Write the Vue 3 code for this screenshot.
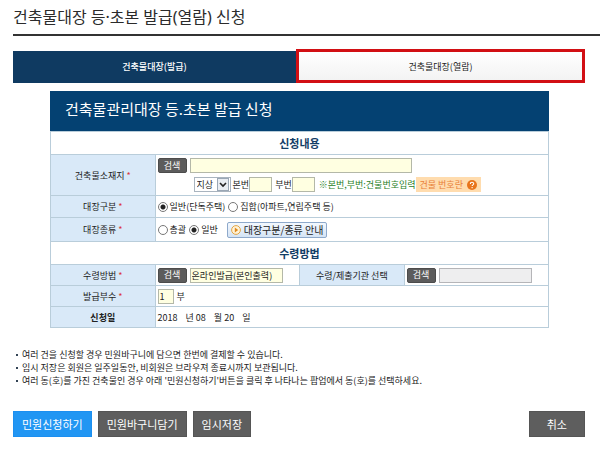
<script setup>
import { ref } from 'vue'

const address = ref('')
const ground = ref('지상')
const mainNo = ref('')
const subNo = ref('')
const ledger = ref('general')
const kind = ref('general')
const method = ref('온라인발급(본인출력)')
const agency = ref('')
const copies = ref('1')

const notes = [
  '여러 건을 신청할 경우 민원바구니에 담으면 한번에 결제할 수 있습니다.',
  '임시 저장은 회원은 일주일동안, 비회원은 브라우져 종료시까지 보관됩니다.',
  "여러 동(호)를 가진 건축물인 경우 아래 '민원신청하기'버튼을 클릭 후 나타나는 팝업에서 동(호)를 선택하세요.",
]
</script>

<template>
  <main class="page">
    <h1>건축물대장 등·초본 발급(열람) 신청</h1>

    <nav class="tabs">
      <a href="#issue" class="tab tab-active">건축물대장(발급)</a>
      <a href="#view" class="tab tab-marked">건축물대장(열람)</a>
    </nav>

    <form class="form" @submit.prevent>
      <h2>건축물관리대장 등.초본 발급 신청</h2>
      <table>
        <colgroup>
          <col class="c-label" /><col class="c-value" /><col class="c-label" /><col />
        </colgroup>
        <tbody>
          <tr class="section"><th colspan="4">신청내용</th></tr>
          <tr class="row-address">
            <th scope="row"><label for="address">건축물소재지 <i>*</i></label></th>
            <td colspan="3">
              <div class="line">
                <button type="button" class="search">검색</button>
                <input id="address" v-model="address" type="text" class="field wide" />
              </div>
              <div class="line sub">
                <span class="select">
                  <select v-model="ground" aria-label="지상"><option>지상</option></select>
                  <svg viewBox="0 0 12 13" aria-hidden="true">
                    <rect x="0.5" y="0.5" width="11" height="12" fill="#e9edf2" stroke="#9aa7b5" />
                    <path d="M3 5l3 3 3-3" fill="none" stroke="#222" stroke-width="1.6" />
                  </svg>
                </span>
                <label for="main-no">본번</label>
                <input id="main-no" v-model="mainNo" type="text" class="field number" />
                <label for="sub-no" class="second">부번</label>
                <input id="sub-no" v-model="subNo" type="text" class="field number" />
                <span class="hint">※본번,부번:건물번호입력</span>
                <a href="#number" class="tag">건물 번호란
                  <svg viewBox="0 0 10 10" aria-hidden="true">
                    <circle cx="5" cy="5" r="5" fill="#e8751c" />
                    <path d="M3.3 4c0-2.2 3.4-2.2 3.4-.2 0 1.1-1.6 1.1-1.6 2.3M5.1 7.1v1.1" fill="none" stroke="#fff" stroke-width="1.1" />
                  </svg>
                </a>
              </div>
            </td>
          </tr>
          <tr class="row-ledger">
            <th scope="row">대장구분 <i>*</i></th>
            <td colspan="3">
              <div class="line">
                <label class="radio"><input v-model="ledger" type="radio" name="ledger" value="general" />일반(단독주택)</label>
                <label class="radio"><input v-model="ledger" type="radio" name="ledger" value="group" />집합(아파트,연립주택 등)</label>
              </div>
            </td>
          </tr>
          <tr class="row-kind">
            <th scope="row">대장종류 <i>*</i></th>
            <td colspan="3">
              <div class="line">
                <label class="radio"><input v-model="kind" type="radio" name="kind" value="all" />총괄</label>
                <label class="radio"><input v-model="kind" type="radio" name="kind" value="general" />일반</label>
                <button type="button" class="guide">
                  <svg viewBox="0 0 10 10" aria-hidden="true">
                    <circle cx="5" cy="5" r="4.4" fill="#fff3d8" stroke="#e3a545" />
                    <path d="M3.8 2.4L7.2 5 3.8 7.6z" fill="#e08a1c" />
                  </svg>
                  대장구분/종류 안내
                </button>
              </div>
            </td>
          </tr>
          <tr class="section"><th colspan="4">수령방법</th></tr>
          <tr class="row-plain">
            <th scope="row"><label for="method">수령방법 <i>*</i></label></th>
            <td>
              <div class="line">
                <button type="button" class="search">검색</button>
                <input id="method" v-model="method" type="text" class="field medium" />
              </div>
            </td>
            <th scope="row"><label for="agency">수령/제출기관 선택</label></th>
            <td>
              <div class="line">
                <button type="button" class="search">검색</button>
                <input id="agency" v-model="agency" type="text" class="field medium muted" readonly />
              </div>
            </td>
          </tr>
          <tr class="row-plain">
            <th scope="row"><label for="copies">발급부수 <i>*</i></label></th>
            <td colspan="3">
              <div class="line">
                <input id="copies" v-model="copies" type="text" class="field tiny" />
                <span>부</span>
              </div>
            </td>
          </tr>
          <tr class="row-plain">
            <th scope="row" class="strong">신청일</th>
            <td colspan="3">
              <div class="date">
                <span>2018</span><span>년 08</span><span>월 20</span><span>일</span>
              </div>
            </td>
          </tr>
        </tbody>
      </table>
    </form>

    <ul class="notes">
      <li v-for="note in notes" :key="note">{{ note }}</li>
    </ul>

    <div class="actions">
      <button type="button" class="primary">민원신청하기</button>
      <button type="button">민원바구니담기</button>
      <button type="button">임시저장</button>
      <button type="button" class="cancel">취소</button>
    </div>
  </main>
</template>

<style>
body {
  background: #fff;
}
</style>

<style scoped>
.page,
.page * {
  box-sizing: border-box;
}
.page {
  padding-left: 13px;
  font-family: "Noto Sans CJK KR", sans-serif;
  font-size: 9px;
  line-height: 13px;
  color: #222;
}
button,
input,
select {
  font: inherit;
  color: inherit;
  margin: 0;
}
button {
  cursor: pointer;
  white-space: nowrap;
}
h1 {
  margin: 0;
  height: 36px;
  padding-top: 5px;
  border-bottom: 2px solid #333;
  color: #2b2b2b;
  font-family: "Noto Sans", "Noto Sans CJK KR", sans-serif;
  font-size: 16px;
  line-height: 24px;
  font-weight: 400;
}
.tabs {
  display: flex;
  margin: 13px 15px 0 0;
  align-items: flex-end;
}
.tab {
  flex: 1;
  height: 32px;
  line-height: 32px;
  text-align: center;
  text-decoration: none;
  color: #222;
}
.tab-active {
  background: #0f3a61;
  color: #fff;
  font-weight: 500;
}
.tab-marked {
  height: 34px;
  border: 3px solid #d20f14;
  background: linear-gradient(#fff, #f3f3f3);
  line-height: 30px;
}
.form {
  margin: 8px 51px 0 37px;
}
h2 {
  margin: 0;
  height: 40px;
  padding-left: 15px;
  background: #044172;
  color: #fff;
  font-size: 15px;
  line-height: 36px;
  font-weight: 400;
}
table {
  width: 100%;
  table-layout: fixed;
  border-collapse: collapse;
}
.c-label {
  width: 21%;
}
.c-value {
  width: 29%;
}
th,
td {
  padding: 0 2px;
  border: 1px solid #b9cdda;
  font-weight: 400;
  text-align: left;
  vertical-align: middle;
}
th {
  background: #d9e9f8;
  text-align: center;
}
th i {
  color: #d9343c;
  font-style: normal;
}
.section th {
  height: 23px;
  background: #fff;
  color: #123d66;
  font-size: 11px;
  font-weight: 700;
}
.row-address {
  height: 41px;
}
.row-ledger {
  height: 22px;
}
.row-kind {
  height: 24px;
}
.row-plain {
  height: 21px;
}
.strong {
  font-weight: 700;
}
.line {
  display: flex;
  align-items: center;
  gap: 3px;
}
.sub {
  margin-top: 4px;
  padding-left: 36px;
  gap: 0;
  white-space: nowrap;
}
.search {
  width: 29px;
  height: 15px;
  padding: 0;
  border: 1px solid #4c4c4c;
  border-radius: 2px;
  background: #5c5c5c;
  color: #fff;
  line-height: 12px;
}
.field {
  height: 15px;
  padding: 0 1px;
  border: 1px solid #b4b8a8;
  border-radius: 0;
  background: #ffffe1;
  line-height: 12px;
}
.wide {
  width: 222px;
}
.medium {
  width: 93px;
}
.muted {
  background: #eeeeef;
  border-color: #b5b5b8;
}
.number {
  width: 23px;
}
.tiny {
  width: 16px;
}
.select {
  display: inline-grid;
  grid-template-columns: 1fr 13px;
  align-items: center;
  width: 37px;
  height: 15px;
  margin-right: 2px;
  border: 1px solid #a9b4bf;
}
.select select {
  grid-area: 1 / 1 / 2 / 3;
  width: 100%;
  height: 13px;
  padding: 0 0 0 2px;
  border: 0;
  background: #fff;
  appearance: none;
  line-height: 12px;
}
.select svg {
  grid-area: 1 / 2;
  width: 12px;
  height: 13px;
  pointer-events: none;
}
.second {
  margin-left: 3px;
}
.hint {
  margin-left: 4px;
  color: #1f7f26;
}
.tag {
  display: flex;
  align-items: center;
  gap: 4px;
  height: 15px;
  padding: 0 4px;
  background: #ffdcae;
  color: #e8813a;
  text-decoration: none;
}
.tag svg {
  width: 10px;
  height: 10px;
}
.radio {
  display: flex;
  align-items: center;
  gap: 2px;
}
.radio input {
  width: 10px;
  height: 10px;
  border: 1px solid #777;
  border-radius: 50%;
  background: #fff;
  appearance: none;
}
.radio input:checked {
  background: radial-gradient(circle, #222 0 2px, #fff 3px);
}
.guide {
  display: flex;
  align-items: center;
  gap: 3px;
  height: 16px;
  margin-left: 6px;
  padding: 0 3px;
  border: 1px solid #8ea9cb;
  border-radius: 2px;
  background: linear-gradient(#f3f8fe, #d5e4f5);
  font-size: 10px;
  line-height: 14px;
}
.guide svg {
  width: 10px;
  height: 10px;
}
.date {
  display: flex;
  gap: 8px;
}
.notes {
  margin: 20px 15px 0 0;
  padding: 0;
  list-style: none;
}
.notes li {
  display: flex;
  align-items: center;
  gap: 4px;
  padding-left: 3px;
}
.notes li::before {
  content: "";
  width: 2px;
  height: 2px;
  background: #345;
}
.actions {
  display: flex;
  gap: 6px;
  margin: 24px 15px 0 0;
}
.actions button {
  height: 26px;
  padding: 0 8px;
  border: 1px solid #555;
  background: #5e5e5e;
  color: #fff;
  font-size: 11px;
  line-height: 22px;
}
.actions .primary {
  border-color: #1c8ff0;
  background: #2196f3;
}
.actions .cancel {
  margin-left: auto;
  padding: 0 17px;
}
</style>
